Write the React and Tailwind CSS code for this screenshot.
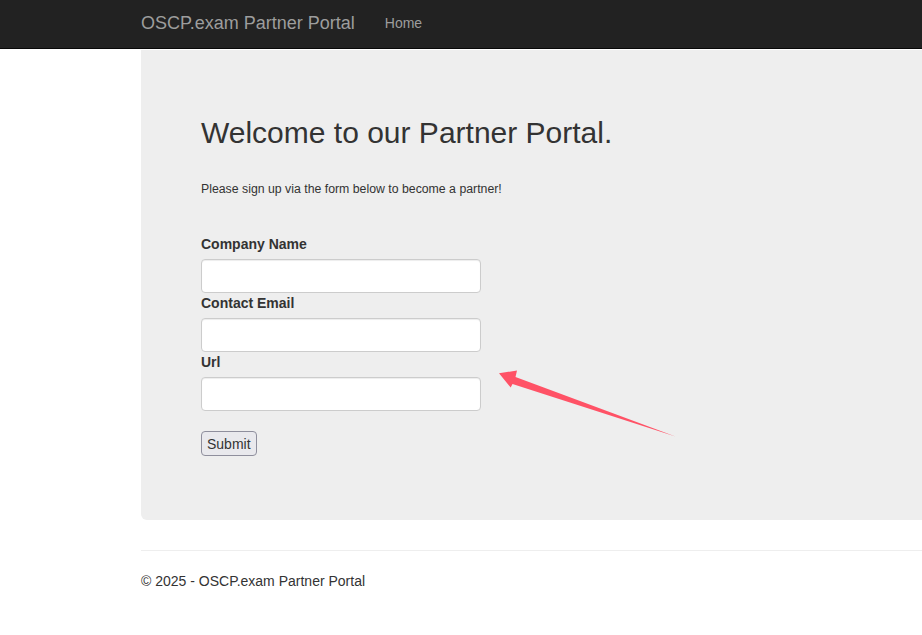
export default function App() {
  return (
    <div
      className="relative min-h-[635px] w-full overflow-hidden bg-white text-[14px] text-[#333]"
      style={{ fontFamily: '"Liberation Sans", Arial, sans-serif' }}
    >
      <nav className="h-[49px] w-full border-b border-[#080808] bg-[#222]">
        <div className="ml-[141px] flex h-[46px] items-center">
          <span className="text-[18px] leading-[20px] text-[#9d9d9d]">OSCP.exam Partner Portal</span>
          <span className="ml-[30px] text-[14px] leading-[20px] text-[#9d9d9d]">Home</span>
        </div>
      </nav>
      <div className="ml-[141px] w-[1140px]">
        <div className="mt-[1px] rounded-b-[6px] bg-[#eee] px-[60px] pb-[64px] pt-[48px]">
          <h1 className="mt-[18px] text-[30px] leading-[33px] font-normal text-[#333]">
            Welcome to our Partner Portal.
          </h1>
          <p className="mt-[32px] text-[12.3px] leading-[17px]">
            Please sign up via the form below to become a partner!
          </p>
          <form className="mt-[36px]" onSubmit={(e) => e.preventDefault()}>
            <label className="block text-[14px] leading-[20px] font-bold">Company Name</label>
            <input className="mt-[5px] block h-[34px] w-[280px] rounded-[4px] border border-[#ccc] bg-white px-3 shadow-[inset_0_1px_1px_rgba(0,0,0,0.075)]" />
            <label className="block text-[14px] leading-[20px] font-bold">Contact Email</label>
            <input className="mt-[5px] block h-[34px] w-[280px] rounded-[4px] border border-[#ccc] bg-white px-3 shadow-[inset_0_1px_1px_rgba(0,0,0,0.075)]" />
            <label className="block text-[14px] leading-[20px] font-bold">Url</label>
            <input className="mt-[5px] block h-[34px] w-[280px] rounded-[4px] border border-[#ccc] bg-white px-3 shadow-[inset_0_1px_1px_rgba(0,0,0,0.075)]" />
            <button
              type="submit"
              className="mt-[20px] block h-[25px] rounded-[4px] border border-[#8f8f9d] bg-[#e9e9ed] px-[5px] text-[14px] leading-[20px] text-[#333]"
            >
              Submit
            </button>
          </form>
        </div>
        <hr className="mt-[30px] border-t border-[#eee]" />
        <footer className="mt-[20px]">
          <p className="text-[14px] leading-[20px]">© 2025 - OSCP.exam Partner Portal</p>
        </footer>
      </div>
      <svg
        className="pointer-events-none absolute left-0 top-0"
        width="922"
        height="635"
        viewBox="0 0 922 635"
      >
        <polygon
          points="499,373.3 517,370.5 515.5,377 675.5,436.5 512.5,384 510.7,387.5"
          fill="#ff5266"
        />
      </svg>
    </div>
  );
}
